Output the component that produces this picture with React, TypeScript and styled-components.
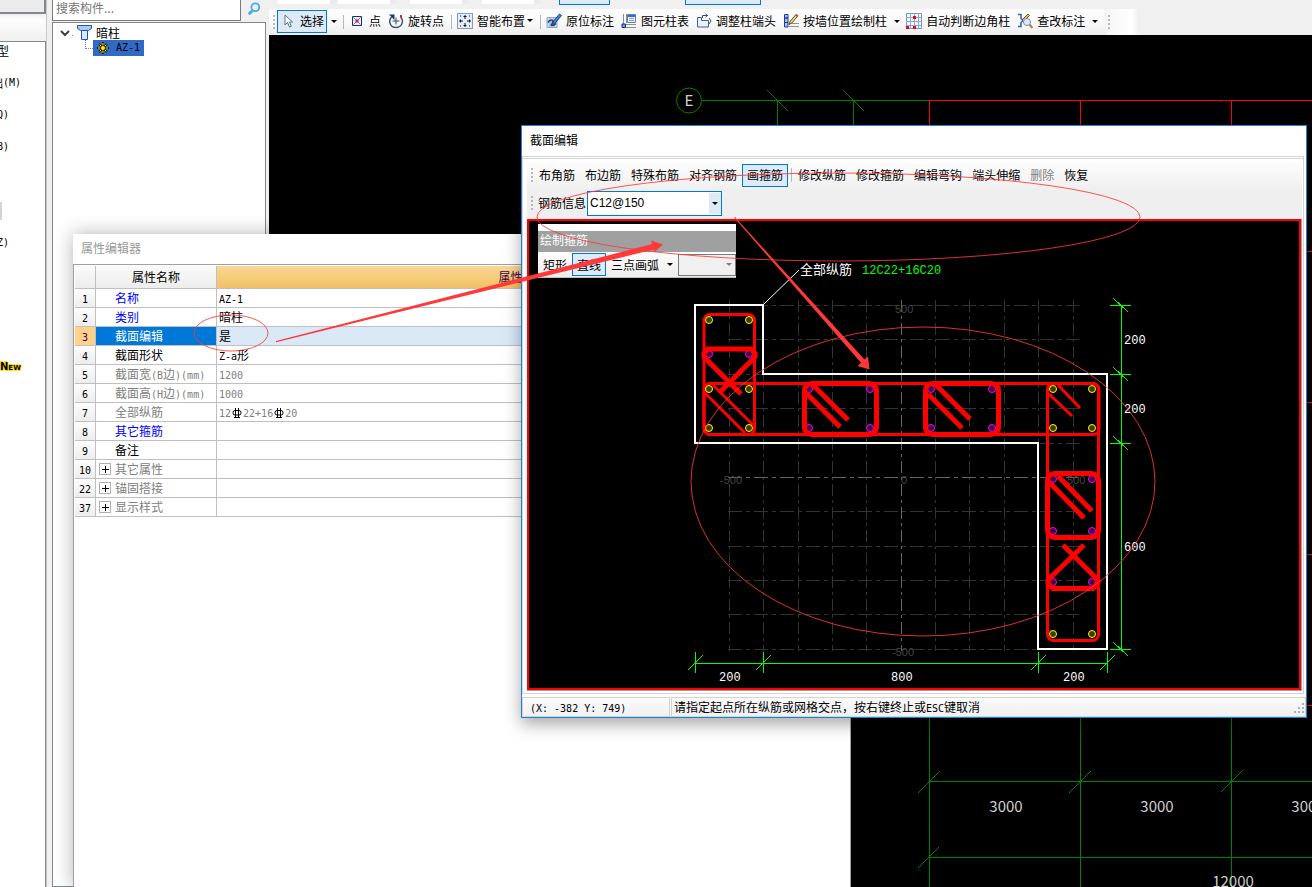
import React from "react";
import styled, { createGlobalStyle, css } from "styled-components";

const GlobalStyle = createGlobalStyle`
  *, *::before, *::after { box-sizing: border-box; }
  body {
    margin: 0;
    background: #f0f0f0;
    color: #000;
    font: 12px/16px "Noto Sans CJK SC", sans-serif;
  }
  button, input, select { font: inherit; color: inherit; }
`;

const LATIN = '"DejaVu Sans Mono", monospace';
const DRAFT = '"Liberation Mono", "Noto Sans CJK SC", monospace';

/* ---------- text ---------- */

const Latin = styled.span`
  font-family: ${LATIN};
  font-size: 10px;
  line-height: 1;
  white-space: nowrap;
`;

const Mixed = ({ text }: { text: string }) => (
  <>
    {text
      .split(/([\x20-\x7e]+)/)
      .filter(Boolean)
      .map((part, i) =>
        /^[\x20-\x7e]/.test(part) ? <Latin key={i}>{part}</Latin> : <React.Fragment key={i}>{part}</React.Fragment>
      )}
  </>
);

/* ---------- shell ---------- */

const Desktop = styled.div`
  position: relative;
  display: flex;
  height: 100vh;
  overflow: hidden;
`;

const NavColumn = styled.nav`
  flex: none;
  width: 47px;
  display: flex;
  flex-direction: column;
  border-right: 1px solid #c8c8c8;
`;

const NavHead = styled.div`
  height: 14px;
  border-right: 2px solid #828790;
  border-bottom: 2px solid #828790;
  background: #ececec;
`;

const NavStrip = styled.div`
  height: 27px;
  background: linear-gradient(#f0f0f0, #fdfdfd 20%, #f0f0f0);
`;

const NavList = styled.ul`
  flex: 1;
  display: flex;
  flex-direction: column;
  gap: 14px;
  margin: 0;
  padding: 0;
  list-style: none;
  background: #fff;
  border-top: 1px solid #828790;
  border-right: 1px solid #828790;
`;

const NavItem = styled.li<{ $wide?: boolean }>`
  display: flex;
  justify-content: flex-end;
  align-items: center;
  width: ${(p) => (p.$wide ? 21 : 9)}px;
  height: 18px;
  white-space: nowrap;
`;

const NavThumb = styled.li`
  width: 2px;
  height: 18px;
  margin-top: 32px;
  background: #d4d4d4;
`;

const NewTag = styled.li`
  height: 18px;
  margin-top: 92px;
  font: bold 10px/18px "DejaVu Sans", sans-serif;
  font-variant: small-caps;
  text-shadow: 1px 0 #ffe000, -1px 0 #ffe000, 0 1px #ffe000, 0 -1px #ffe000, 1px 1px #ffe000, -1px -1px #ffe000;
`;

const TreeColumn = styled.aside`
  flex: none;
  width: 214px;
  margin: 0 3px 0 5px;
  display: flex;
  flex-direction: column;
`;

const SearchRow = styled.form`
  display: flex;
  height: 21px;
  margin-bottom: 1px;
`;

const SearchInput = styled.input`
  width: 189px;
  padding: 0 3px 5px;
  border: 1px solid #7a7a7a;
  border-top: 0;
  background: #fff;
  &::placeholder { color: #767676; opacity: 1; }
`;

const SearchButton = styled.button`
  flex: 1;
  display: grid;
  place-items: center;
  padding: 0 0 3px;
  border: 0;
  background: #f0f0f0;
`;

const Tree = styled.ul`
  flex: 1;
  margin: 0;
  padding: 2px 6px;
  list-style: none;
  background: #fff;
  border: 1px solid #828790;
`;

const TreeNode = styled.li`
  display: flex;
  align-items: center;
  height: 15px;
  gap: 4px;
`;

const TreeLeaf = styled.li`
  display: flex;
  height: 16px;
  padding-left: 26px;
`;

const LeafLine = styled.span`
  width: 8px;
  height: 9px;
  border-left: 1px dotted #808080;
  border-bottom: 1px dotted #808080;
`;

const LeafButton = styled.button`
  display: flex;
  align-items: center;
  gap: 7px;
  height: 16px;
  width: 51px;
  padding: 0 4px;
  border: 0;
  background: #316ac5;
`;

const Main = styled.main`
  flex: 1;
  min-width: 0;
  display: flex;
  flex-direction: column;
`;

const CutRow = styled.div`
  display: flex;
  height: 9px;
  padding-left: 9px;
  align-items: flex-start;
`;

const CutBox = styled.span<{ $gap: number }>`
  width: 58px;
  height: 4px;
  margin-right: ${(p) => p.$gap}px;
  background: #fff;
  border-right: 6px solid #ebebeb;
`;

const CutButton = styled.span<{ $wide?: boolean }>`
  width: ${(p) => (p.$wide ? 76 : 51)}px;
  height: 5px;
  margin: 0 ${(p) => (p.$wide ? 0 : 75)}px 0 0;
  background: #dcebf7;
  border: 1px solid #0078d7;
  border-top: 0;
`;

const Toolbar = styled.div`
  display: flex;
  height: 26px;
  flex: none;
`;

const ToolStrip = styled.div`
  display: flex;
  align-items: center;
  gap: 1px;
  padding: 0 5px 1px 4px;
  border-radius: 3px;
  background: linear-gradient(#fdfdfd, #fafafa 50%, #ededed);
`;

const TailStrip = styled.div`
  display: flex;
  align-items: center;
  width: 31px;
  margin-left: 1px;
  padding-left: 2px;
  background: linear-gradient(90deg, #f6f6f6, #fff 80%, #f4f4f4);
`;

const Grip = styled.span`
  flex: none;
  width: 2px;
  height: 14px;
  margin-right: 1px;
  background: repeating-linear-gradient(#b8b8b8 0 2px, transparent 2px 4px);
`;

const Divider = styled.span`
  flex: none;
  width: 1px;
  height: 14px;
  margin: 0 1px 0 3px;
  background: #b8b8b8;
`;

const ToolButton = styled.button<{ $active?: boolean }>`
  flex: none;
  display: flex;
  align-items: center;
  gap: 4px;
  height: 23px;
  padding: 0 2px 2px;
  border: 1px solid ${(p) => (p.$active ? "#0078d7" : "transparent")};
  background: ${(p) => (p.$active ? "#dcebf7" : "none")};
  white-space: nowrap;
`;

const ArrowButton = styled.button`
  flex: none;
  display: grid;
  place-items: center;
  width: 11px;
  height: 23px;
  padding: 0;
  border: 0;
  background: none;
`;

const Caret = styled.span<{ $muted?: boolean; $tight?: boolean }>`
  width: 0;
  height: 0;
  border: 3px solid transparent;
  border-top-color: ${(p) => (p.$muted ? "#808080" : "#000")};
  border-bottom: 0;
  ${(p) => p.$tight && css`margin-left: -2px;`}
`;

const DrawingArea = styled.div`
  flex: 1;
  overflow: hidden;
  background: #000;
  & > svg { display: block; }
`;

/* ---------- property editor ---------- */

const PropertyWindow = styled.section`
  position: absolute;
  left: 73px;
  top: 234px;
  bottom: 0;
  width: 778px;
  display: flex;
  flex-direction: column;
  background: #fff;
  border-right: 1px solid #a0a0a0;
  box-shadow: 0 0 18px rgba(0, 0, 0, 0.3);
`;

const PropertyTitle = styled.h2`
  margin: 0;
  padding-left: 8px;
  height: 30px;
  font-size: 12px;
  line-height: 28px;
  font-weight: 400;
  color: #999;
`;

const PropertyBody = styled.div`
  flex: 1;
  padding: 1px 0 0 1px;
  border-top: 1px solid #a0a0a0;
  border-left: 1px solid #a0a0a0;
`;

const PropertyTable = styled.table`
  width: 100%;
  table-layout: fixed;
  border-spacing: 0;
  th, td {
    padding: 0;
    font-weight: 400;
    white-space: nowrap;
    border-right: 1px solid #c0c0c0;
    border-bottom: 1px solid #c0c0c0;
  }
  thead th {
    height: 23px;
    background: linear-gradient(#fafafa, #ededed);
  }
`;

const NumberCol = styled.col`width: 21px;`;
const NameCol = styled.col`width: 121px;`;
const ValueCol = styled.col`width: 600px;`;

const ValueHead = styled.th`
  && { background: linear-gradient(#fad796, #f2c163); }
  color: #400040;
`;

const toneColor = { key: "#0000ff", plain: "#000", dim: "#808080" };
type Tone = keyof typeof toneColor;

const PropertyRow = styled.tr<{ $tone: Tone; $selected?: boolean }>`
  height: 19px;
  line-height: 16px;
  th {
    text-align: center;
    color: ${(p) => (p.$selected ? "#400040" : "#000")};
    background: ${(p) => (p.$selected ? "#ffd28c" : "linear-gradient(#fdfdfd, #ededed)")};
  }
  td {
    color: ${(p) => (p.$selected ? "#fff" : toneColor[p.$tone])};
    background: ${(p) => (p.$selected ? "#0078d7" : "#fff")};
  }
  td + td {
    padding-left: 2px;
    color: ${(p) => (p.$tone === "dim" ? "#808080" : "#000")};
    background: ${(p) => (p.$selected ? "#d9e9f8" : "#fff")};
  }
`;

const NameCell = styled.div`
  display: flex;
  align-items: center;
  gap: 4px;
  height: 18px;
  padding-left: 3px;
`;

const ExpandSlot = styled.span`
  width: 12px;
  height: 12px;
`;

const ExpandButton = styled.button`
  display: grid;
  place-items: center;
  width: 12px;
  height: 12px;
  padding: 0;
  border: 1px solid #b0b0b0;
  background: #fff;
`;

const RebarIcon = styled.svg`
  vertical-align: -1px;
`;

const RebarMark = () => (
  <RebarIcon width="12" height="10" viewBox="0 0 12 10" stroke="#000" fill="none">
    <rect x="2" y="2.500" width="8" height="4.500" rx="2" />
    <path d="M4.500 0v9M7.500 0v9M3 9.500h6" />
  </RebarIcon>
);

const Plus = () => (
  <svg width="8" height="8" viewBox="0 0 8 8" stroke="#000" shapeRendering="crispEdges">
    <path d="M4.500 1v7M1 4.500h7" />
  </svg>
);

type Property = { no: number; name: string; value?: string; tone: Tone; selected?: boolean; group?: boolean };

const properties: Property[] = [
  { no: 1, name: "名称", value: "AZ-1", tone: "key" },
  { no: 2, name: "类别", value: "暗柱", tone: "key" },
  { no: 3, name: "截面编辑", value: "是", tone: "plain", selected: true },
  { no: 4, name: "截面形状", value: "Z-a形", tone: "plain" },
  { no: 5, name: "截面宽(B边)(mm)", value: "1200", tone: "dim" },
  { no: 6, name: "截面高(H边)(mm)", value: "1000", tone: "dim" },
  { no: 7, name: "全部纵筋", value: "12#22+16#20", tone: "dim" },
  { no: 8, name: "其它箍筋", tone: "key" },
  { no: 9, name: "备注", tone: "plain" },
  { no: 10, name: "其它属性", tone: "dim", group: true },
  { no: 22, name: "锚固搭接", tone: "dim", group: true },
  { no: 37, name: "显示样式", tone: "dim", group: true },
];

/* "#" in a value stands for the rebar grade mark. */
const PropertyValue = ({ value }: { value: string }) => (
  <>
    {value.split("#").map((part, i) => (
      <React.Fragment key={i}>
        {i > 0 && <RebarMark />}
        <Mixed text={part} />
      </React.Fragment>
    ))}
  </>
);

const PropertyEditor = () => (
  <PropertyWindow>
    <PropertyTitle>属性编辑器</PropertyTitle>
    <PropertyBody>
      <PropertyTable>
        <colgroup>
          <NumberCol />
          <NameCol />
          <ValueCol />
          <col />
        </colgroup>
        <thead>
          <tr>
            <th />
            <th>属性名称</th>
            <ValueHead>属性值</ValueHead>
            <th />
          </tr>
        </thead>
        <tbody>
          {properties.map((p) => (
            <PropertyRow key={p.no} $tone={p.tone} $selected={p.selected}>
              <th scope="row"><Latin>{p.no}</Latin></th>
              <td>
                <NameCell>
                  {p.group ? <ExpandButton aria-label={p.name}><Plus /></ExpandButton> : <ExpandSlot />}
                  <span><Mixed text={p.name} /></span>
                </NameCell>
              </td>
              <td>{p.value && <PropertyValue value={p.value} />}</td>
              <td />
            </PropertyRow>
          ))}
        </tbody>
      </PropertyTable>
    </PropertyBody>
  </PropertyWindow>
);

/* ---------- section editor ---------- */

const Dialog = styled.section`
  position: absolute;
  left: 521px;
  right: 5px;
  top: 125px;
  display: flex;
  flex-direction: column;
  background: #fff;
  border: 1px solid #1883d7;
  box-shadow: 0 6px 16px rgba(0, 0, 0, 0.35);
`;

const DialogTitle = styled.h2`
  margin: 0;
  padding-left: 8px;
  height: 30px;
  font-size: 12px;
  line-height: 28px;
  font-weight: 400;
`;

const DialogBody = styled.div`
  margin-right: 2px;
  padding: 3px 1px 2px 4px;
  border: 1px solid #d4d4d4;
  border-top: 3px double #d4d4d4;
`;

const DialogTools = styled.div`
  height: 57px;
  padding: 0 4px;
  background: linear-gradient(#fdfdfd, #efefef 50%, #efefef);
`;

const DialogToolRow = styled.div<{ $tall?: boolean }>`
  display: flex;
  align-items: center;
  height: ${(p) => (p.$tall ? 30 : 26)}px;
`;

const TextButton = styled.button<{ $active?: boolean }>`
  flex: none;
  height: 23px;
  padding: 0 4px;
  border: 1px solid ${(p) => (p.$active ? "#0078d7" : "transparent")};
  background: ${(p) => (p.$active ? "#dcebf7" : "none")};
  white-space: nowrap;
  &:disabled { color: #808080; }
`;

const FieldLabel = styled.label`
  padding-left: 4px;
  margin-right: 1px;
`;

const ComboFrame = styled.div<{ $plain?: boolean }>`
  display: flex;
  align-items: center;
  justify-content: flex-end;
  position: relative;
  width: ${(p) => (p.$plain ? 58 : 135)}px;
  height: ${(p) => (p.$plain ? 22 : 25)}px;
  border: 1px solid ${(p) => (p.$plain ? "#7a7a7a" : "#0078d7")};
  background: ${(p) => (p.$plain ? "#f0f0f0" : "#fff")};
`;

const ComboSelect = styled.select`
  appearance: none;
  flex: 1;
  align-self: stretch;
  min-width: 0;
  padding: 0 2px;
  border: 0;
  background: none;
  font-family: "Liberation Sans", sans-serif;
  font-size: 12px;
`;

const ComboArrow = styled.span<{ $plain?: boolean }>`
  display: grid;
  place-items: center;
  width: 12px;
  height: 21px;
  background: ${(p) => (p.$plain ? "none" : "#dcebf7")};
  pointer-events: none;
`;

const SectionCanvas = styled.div`
  position: relative;
  height: 471px;
  overflow: hidden;
  background: #000;
  border: 2px solid #f00;
  & > svg { display: block; }
`;

const CanvasFrame = styled.div`
  border-right: 1px solid #a0a0a0;
  border-bottom: 1px solid #a0a0a0;
`;

const Palette = styled.div`
  position: absolute;
  left: 9px;
  top: 3px;
  width: 198px;
  padding-top: 7px;
  background: #fff;
  border-bottom: 1px solid #c0c0c0;
`;

const PaletteTitle = styled.div`
  height: 21px;
  padding-left: 2px;
  line-height: 18px;
  color: #fff;
  background: #a0a0a0;
`;

const PaletteRow = styled.div`
  display: flex;
  align-items: center;
  height: 25px;
  background: linear-gradient(#fdfdfd, #ededed);
`;

const ArrowGap = styled.span`
  display: grid;
  place-items: center;
  width: 12px;
  margin-right: 2px;
`;

const StatusBar = styled.footer`
  display: flex;
  height: 20px;
  margin-top: 3px;
  background: linear-gradient(#fbfbfb, #f0f0f0);
`;

const StatusCell = styled.div<{ $grow?: boolean }>`
  ${(p) => (p.$grow ? css`flex: 1; padding-left: 2px;` : css`width: 148px; padding-left: 7px; margin-right: 1px;`)}
  border: 1px solid #d4d4d4;
  line-height: 18px;
  white-space: nowrap;
`;

const SizeGrip = styled.span`
  align-self: flex-end;
  width: 12px;
  height: 14px;
  margin-left: -12px;
  & > svg { display: block; }
`;

const gridX = [729, 763, 798, 832, 866, 901, 935, 969, 1004, 1038, 1073];
const gridY = [305, 339, 374, 408, 443, 477, 511, 546, 580, 614, 649];
const cornerBars = [
  [709, 320], [749, 320], [709, 389], [749, 389], [709, 428], [749, 428],
  [1053, 389], [1092, 389], [1053, 428], [1092, 428], [1053, 634], [1092, 634],
];
const middleBars = [
  [709, 354], [749, 354], [809, 389], [870, 389], [809, 428], [870, 428], [931, 389], [992, 389],
  [931, 428], [992, 428], [1053, 479], [1092, 479], [1053, 531], [1092, 531], [1053, 582], [1092, 582],
];

const Bars = ({ at, color, fill }: { at: number[][]; color: string; fill: string }) => (
  <g stroke={color} fill={fill}>
    {at.map(([x, y]) => (
      <circle key={`${x}-${y}`} cx={x} cy={y} r="3.5" />
    ))}
  </g>
);

const SectionDrawing = () => (
  <svg width="771" height="467" viewBox="529 221 771 467" fill="none">
    <g shapeRendering="crispEdges" stroke="#333">
      {gridX.map((x) => (
        <path key={x} d={`M${x + 0.5} 300V651`} strokeDasharray="12 4 3 4" stroke={x === 901 ? "#666" : undefined} />
      ))}
      {gridY.map((y) => (
        <path key={y} d={`M728 ${y + 0.5}H1079`} strokeDasharray="14 4 4 4" stroke={y === 477 ? "#666" : undefined} />
      ))}
    </g>
    <g fill="#444" fontFamily='"Liberation Sans", sans-serif' fontSize="11">
      <text x="895" y="313">500</text>
      <text x="720" y="484">-500</text>
      <text x="901" y="484">0</text>
      <text x="1067" y="484">500</text>
      <text x="892" y="656">-500</text>
    </g>
    <path d="M695 305H763V374H1107V649H1038V443H695Z" stroke="#fff" strokeWidth="2" shapeRendering="crispEdges" />
    <path d="M764 304L799 270" stroke="#fff" />
    <g stroke="#f00" strokeWidth="3">
      <rect x="704" y="314.500" width="50.500" height="120" rx="6" />
      <rect x="704" y="383.500" width="395" height="51" rx="6" />
      <rect x="1047.500" y="383.500" width="51" height="257" rx="6" />
      <path d="M705 393L745 433M713 385L753 425M1049 394L1072 416M1058 385L1080 408" />
    </g>
    <Bars at={cornerBars} color="#ff0" fill="#3c3c00" />
    <Bars at={middleBars} color="#f0f" fill="#400040" />
    <g stroke="#f00" strokeWidth="5">
      <path d="M719 393L755 357V353L751 349H708L704 353V357L741 394" />
      <rect x="804.500" y="383.500" width="72" height="51" rx="7" />
      <rect x="925.500" y="383.500" width="73" height="51" rx="7" />
      <path d="M806 393L840 427M813 385L848 420M928 394L962 428M936 385L970 419" />
      <rect x="1047.500" y="473.500" width="51" height="64" rx="7" />
      <path d="M1050 483L1084 518M1058 476L1092 511" />
      <path d="M1063 545L1098 580V583L1093 588.500H1053L1048 583V580L1084 545" />
    </g>
    <g stroke="#0f0" shapeRendering="crispEdges">
      <path d="M1121.500 305V650M695 663.500H1108" />
      {[305, 374, 443, 649].map((y) => (
        <path key={y} d={`M1110 ${y + 0.5}H1131M1113 ${y - 7}L1128 ${y + 7}`} />
      ))}
      {[695, 763, 1038, 1107].map((x) => (
        <path key={x} d={`M${x + 0.5} 652V673M${x - 7} 670L${x + 8} 655`} />
      ))}
    </g>
    <g fill="#fff" fontFamily={DRAFT} fontSize="12">
      <text x="800" y="274" fontSize="13">全部纵筋</text>
      <text x="862" y="274" fill="#0f0">12C22+16C20</text>
      <text x="1124" y="344">200</text>
      <text x="1124" y="413">200</text>
      <text x="1124" y="551">600</text>
      <text x="719" y="681">200</text>
      <text x="891" y="681">800</text>
      <text x="1063" y="681">200</text>
    </g>
  </svg>
);

const SectionEditor = () => (
  <Dialog role="dialog" aria-label="截面编辑">
    <DialogTitle>截面编辑</DialogTitle>
    <DialogBody>
      <DialogTools>
        <DialogToolRow>
          <Grip />
          {["布角筋", "布边筋", "特殊布筋", "对齐钢筋"].map((t) => (
            <TextButton key={t}>{t}</TextButton>
          ))}
          <TextButton $active>画箍筋</TextButton>
          <Divider />
          {["修改纵筋", "修改箍筋", "编辑弯钩", "端头伸缩"].map((t) => (
            <TextButton key={t}>{t}</TextButton>
          ))}
          <TextButton disabled>删除</TextButton>
          <TextButton>恢复</TextButton>
        </DialogToolRow>
        <DialogToolRow $tall>
          <Grip />
          <FieldLabel htmlFor="rebar">钢筋信息</FieldLabel>
          <ComboFrame>
            <ComboSelect id="rebar" defaultValue="C12@150">
              <option>C12@150</option>
            </ComboSelect>
            <ComboArrow><Caret /></ComboArrow>
          </ComboFrame>
        </DialogToolRow>
      </DialogTools>
      <CanvasFrame>
        <SectionCanvas>
          <SectionDrawing />
          <Palette>
            <PaletteTitle>绘制箍筋</PaletteTitle>
            <PaletteRow>
              <TextButton>矩形</TextButton>
              <TextButton $active>直线</TextButton>
              <TextButton>三点画弧</TextButton>
              <ArrowGap><Caret /></ArrowGap>
              <ComboFrame $plain>
                <ComboSelect aria-label="弧参数" />
                <ComboArrow $plain><Caret $muted /></ComboArrow>
              </ComboFrame>
            </PaletteRow>
          </Palette>
        </SectionCanvas>
      </CanvasFrame>
    </DialogBody>
    <StatusBar>
      <StatusCell><Latin>(X: -382 Y: 749)</Latin></StatusCell>
      <StatusCell $grow><Mixed text="请指定起点所在纵筋或网格交点，按右键终止或ESC键取消" /></StatusCell>
      <SizeGrip>
        <svg width="12" height="12" viewBox="0 0 12 12" fill="#b0b0b0">
          <path d="M8 0h2v2h-2zM4 4h2v2h-2zM8 4h2v2h-2zM0 8h2v2h-2zM4 8h2v2h-2zM8 8h2v2h-2z" />
        </svg>
      </SizeGrip>
    </StatusBar>
  </Dialog>
);

/* ---------- icons ---------- */

const Icon = ({ children, size = 16 }: { children: React.ReactNode; size?: number }) => (
  <svg width={size} height={size} viewBox="0 0 16 16" fill="none">{children}</svg>
);

const icons = {
  select: <path d="M5 2v10l2.500-2.500L9.500 14l1.800-.8L9.500 9H12.500z" fill="#fff" stroke="#5a7288" />,
  point: (
    <>
      <path d="M3.500 3.500h9v9h-9z" fill="#eaf2ff" stroke="#1c2f7c" />
      <path d="M4.500 4.500l7 7M11.500 4.500l-7 7" stroke="#6a80c8" />
      <path d="M6.500 6.500h3v3h-3z" fill="#e02020" />
    </>
  ),
  rotate: (
    <>
      <path d="M3.500 4C0 8 2 14.500 8 14.500S16 8 13 4.500" stroke="#3c5588" strokeWidth="1.500" />
      <path d="M1 1.500h5.500v5.500z" fill="#203864" />
      <path d="M8 4.500v7M4.500 8h7" stroke="#304878" />
      <path d="M12 2h2v3h-2z" fill="#d03030" />
    </>
  ),
  smart: (
    <>
      <path d="M.5 .5h15v15H.5z" fill="#e4eefa" stroke="#304060" strokeDasharray="1 1" />
      <path
        d="M8 2v4M6.500 3.500h3M8 10v4M6.500 12.500h3M2 8h4M3.500 6.500v3M10 8h4M12.500 6.500v3M3 3h1M12 3h1M3 13h1M12 13h1"
        stroke="#101828"
      />
    </>
  ),
  note: (
    <>
      <path d="M1 4.500h10v10H1z" fill="#c8d8f0" stroke="#8ca8d4" />
      <path d="M1 8h11M4 4v11M8 4v11" stroke="#90a8d0" />
      <path d="M6 10L13.500 1 15.500 2.500 8 11.500z" fill="#3c84dc" stroke="#1c4890" />
      <path d="M2 9.500c2-3 5-3 5-1s-3 4-1 4 3-1 4-2" stroke="#283c60" strokeWidth="1.500" />
    </>
  ),
  table: (
    <>
      <path d="M2.500 1v10M5.500 1v9M5 11.500h10M5 14.500h10" stroke="#8c8c8c" />
      <path d="M6.500 1.500h8v8h-8z" fill="#eef4ff" stroke="#5c80c4" />
      <path d="M6.500 3h8" stroke="#3868c0" strokeWidth="2" />
      <path d="M8 5.500h5M8 7.500h5" stroke="#88a0d0" />
      <path d="M1 11h3.500v3.500H1z" fill="#60a0f0" stroke="#182c88" />
    </>
  ),
  adjust: (
    <>
      <path d="M1.500 4.500h4v3h7v6.500h-11z" fill="#e8f0fc" stroke="#485c90" />
      <path d="M6.500 5V2.500h5M9.500 1l2 1.500-2 1.500M13 5l2 3-2 3" stroke="#2c4888" />
    </>
  ),
  wall: (
    <>
      <path d="M1.500 1.500h3.500v3.500h-3.500zM1.500 5h3.500v4.500h-3.500zM1.500 9.500h3.500v4.500h-3.500z" fill="#9cc4f8" stroke="#203c90" />
      <path d="M6 13.500h10M8 10.500h8" stroke="#909090" />
      <path d="M6 11.500l1-3 6-7 1.800 1.500-6 7z" fill="#f4dc80" stroke="#604820" />
      <path d="M12 2.500l1.500-1.500 2 1.500-1.200 1.600z" fill="#c05030" />
    </>
  ),
  corner: (
    <>
      <path d="M.5 .5h15v15H.5z" fill="#f4f8ff" stroke="#7890c4" />
      <path d="M4.500 0v16M8.500 0v16M12.500 0v16M0 4.500h16M0 8.500h16M0 12.500h16" stroke="#90a8d8" />
      <path d="M7 3h3v3H7zM0 13h3v3H0zM7 13h3v3H7z" fill="#e01010" />
    </>
  ),
  check: (
    <>
      <path d="M1 1.500h3v4l2 2-2 2v4H1" stroke="#3460b8" strokeWidth="1.500" />
      <path d="M5 7l6-6 1.500 1.500-6 6z" fill="#e8b870" stroke="#805030" />
      <circle cx="10" cy="9" r="3.500" fill="#dcecfc" stroke="#7890a8" />
      <path d="M12.500 11.500l3 3.500" stroke="#c07840" strokeWidth="2" />
    </>
  ),
};

/* ---------- model space behind the windows ---------- */

const ModelDrawing = () => (
  <svg width="1043" height="852" viewBox="269 35 1043 852" fill="none">
    <circle cx="689" cy="100.500" r="12.500" stroke="#008000" />
    <g stroke="#008000" shapeRendering="crispEdges">
      <path d="M702 100.500H929M777.500 100V130M853.500 100V130" />
      <path d="M929.500 700V887M1080.500 700V887M1231.500 700V887M929 781.500H1312M929 857.500H1312" />
    </g>
    <path
      stroke="#008000"
      d="M767 90L788 111M843 90L864 111M918 793L940 771M1069 793L1091 771M1221 792L1243 770M918 868L939 847"
    />
    <path
      stroke="#f00"
      shapeRendering="crispEdges"
      d="M929 100.500H1312M1080.500 100V130M929.500 100V130M1231.500 100V130M1300 251.500H1312M1300 402.500H1312M1300 554.500H1312M1300 705.500H1312"
    />
    <g fill="#d0d0d0" fontFamily='"Noto Sans CJK SC", sans-serif' fontSize="15" textAnchor="middle">
      <text x="689" y="106">E</text>
      <text x="1006" y="812">3000</text>
      <text x="1157" y="812">3000</text>
      <text x="1308" y="812">3000</text>
      <text x="1233" y="887">12000</text>
    </g>
  </svg>
);

const MarkupLayer = styled.svg`
  position: absolute;
  left: 0;
  top: 0;
  pointer-events: none;
`;

const Markup = () => (
  <MarkupLayer width="1312" height="887" viewBox="0 0 1312 887" fill="none">
    <g stroke="#ff3838" strokeOpacity="0.85">
      <ellipse cx="231" cy="333" rx="37" ry="18" />
      <ellipse cx="838.500" cy="217" rx="301.500" ry="44" />
      <ellipse cx="923" cy="481.500" rx="232" ry="154.500" />
    </g>
    <g fill="#ff3838">
      <path d="M276 341L652.300 244L651 240.500L663 244.500L654.500 252L653.700 249.500L276 342.200Z" />
      <path d="M734 217.500L735 217L864.500 359.500L868 356.500L869.500 369.500L857.500 366L861 362.800Z" />
    </g>
  </MarkupLayer>
);

/* ---------- page ---------- */

const App = () => (
  <Desktop>
    <GlobalStyle />
    <NavColumn>
      <NavHead />
      <NavStrip />
      <NavList>
        <NavItem>型</NavItem>
        <NavItem $wide><Mixed text="础(M)" /></NavItem>
        <NavItem><Latin>Q)</Latin></NavItem>
        <NavItem><Latin>B)</Latin></NavItem>
        <NavThumb />
        <NavItem><Latin>Z)</Latin></NavItem>
        <NewTag>New</NewTag>
      </NavList>
    </NavColumn>

    <TreeColumn>
      <SearchRow>
        <SearchInput placeholder="搜索构件..." aria-label="搜索构件" />
        <SearchButton type="button" aria-label="搜索">
          <Icon size={14}>
            <circle cx="9.500" cy="6" r="4.500" stroke="#4aa8e8" strokeWidth="2" fill="#eaf6ff" />
            <path d="M6 10l-4 4" stroke="#4aa8e8" strokeWidth="3" />
          </Icon>
        </SearchButton>
      </SearchRow>
      <Tree>
        <TreeNode>
          <svg width="14" height="10" viewBox="0 0 14 10" fill="none">
            <path d="M2 3l4 4 4-4" stroke="#404040" strokeWidth="2" />
            <path d="M13 7.500h1" stroke="#808080" />
          </svg>
          <svg width="15" height="15" viewBox="0 0 15 15" fill="none">
            <path d="M.5 .5h14v3l-3 2h-8l-3-2z" fill="#a8ccf8" stroke="#2850a8" />
            <path d="M4.500 5.500h6v9h-6z" fill="#d8e8fc" stroke="#2850a8" />
          </svg>
          <span>暗柱</span>
        </TreeNode>
        <TreeLeaf>
          <LeafLine />
          <LeafButton>
            <svg width="12" height="12" viewBox="0 0 12 12" fill="none">
              <path d="M6 0v12M0 6h12M2 2l8 8M10 2l-8 8" stroke="#201800" strokeWidth="2" />
              <path d="M6 1v10M1 6h10M2.500 2.500l7 7M9.500 2.500l-7 7" stroke="#ffe800" />
              <circle cx="6" cy="6" r="2.500" fill="#ffe800" stroke="#403000" />
            </svg>
            <Latin>AZ-1</Latin>
          </LeafButton>
        </TreeLeaf>
      </Tree>
    </TreeColumn>

    <Main>
      <CutRow>
        <CutBox $gap={2} />
        <CutBox $gap={14} />
        <CutBox $gap={14} />
        <CutBox $gap={19} />
        <CutButton />
        <CutButton $wide />
      </CutRow>
      <Toolbar>
        <ToolStrip>
          <Grip />
          <ToolButton $active><Icon>{icons.select}</Icon>选择</ToolButton>
          <ArrowButton aria-label="选择方式"><Caret /></ArrowButton>
          <Divider />
          <ToolButton><Icon>{icons.point}</Icon>点</ToolButton>
          <ToolButton><Icon>{icons.rotate}</Icon>旋转点</ToolButton>
          <Divider />
          <ToolButton><Icon>{icons.smart}</Icon>智能布置<Caret $tight /></ToolButton>
          <Divider />
          <ToolButton><Icon>{icons.note}</Icon>原位标注</ToolButton>
          <ToolButton><Icon>{icons.table}</Icon>图元柱表</ToolButton>
          <ToolButton><Icon>{icons.adjust}</Icon>调整柱端头</ToolButton>
          <ToolButton><Icon>{icons.wall}</Icon>按墙位置绘制柱</ToolButton>
          <ArrowButton aria-label="绘制方式"><Caret /></ArrowButton>
          <ToolButton><Icon>{icons.corner}</Icon>自动判断边角柱</ToolButton>
          <ToolButton><Icon>{icons.check}</Icon>查改标注</ToolButton>
          <ArrowButton aria-label="标注方式"><Caret /></ArrowButton>
        </ToolStrip>
        <TailStrip><Grip /></TailStrip>
      </Toolbar>
      <DrawingArea><ModelDrawing /></DrawingArea>
    </Main>

    <PropertyEditor />
    <SectionEditor />
    <Markup />
  </Desktop>
);

export default App;
